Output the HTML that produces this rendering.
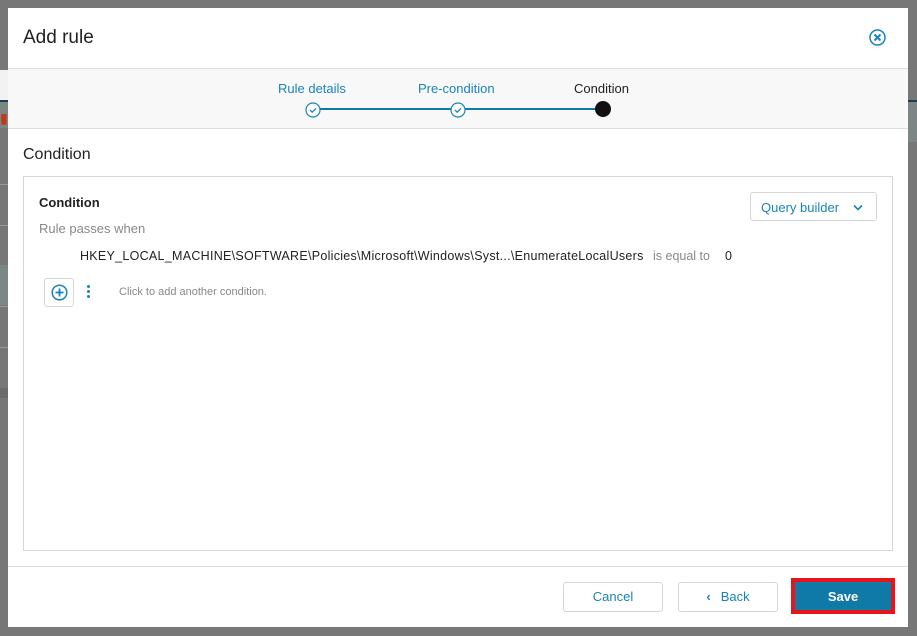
<!DOCTYPE html>
<html><head><style>
*{box-sizing:border-box;margin:0;padding:0}
body{width:917px;height:636px;background:#777;font-family:"Liberation Sans",sans-serif;position:relative;overflow:hidden}
.abs{position:absolute}
.modal{left:8px;top:8px;width:900px;height:619px;background:#fff}
.t{position:absolute;white-space:nowrap}
.btn{position:absolute;top:574px;height:30px;border:1px solid #d6d6d6;border-radius:3px;color:#1a84b8;font-size:13px;text-align:center;line-height:28px;background:#fff}
</style></head><body>
<div class="abs" style="left:0;top:70px;width:8px;height:30px;background:#f2f2f2"></div>
<div class="abs" style="left:0;top:100px;width:8px;height:2px;background:#1e3c55"></div>
<div class="abs" style="left:0;top:102px;width:8px;height:26px;background:#7d8585"></div>
<div class="abs" style="left:0;top:110px;width:8px;height:20px;color:#c0391c;font-size:14px">▮</div>
<div class="abs" style="left:0;top:184px;width:8px;height:1px;background:#9a9a9a"></div>
<div class="abs" style="left:0;top:225px;width:8px;height:1px;background:#9a9a9a"></div>
<div class="abs" style="left:0;top:265px;width:8px;height:40px;background:#7d8585"></div>
<div class="abs" style="left:0;top:306px;width:8px;height:1px;background:#9a9a9a"></div>
<div class="abs" style="left:0;top:347px;width:8px;height:1px;background:#9a9a9a"></div>
<div class="abs" style="left:0;top:388px;width:8px;height:10px;background:#6b6b6b"></div>
<div class="abs" style="left:908px;top:100px;width:9px;height:2px;background:#1e3c55"></div>
<div class="abs" style="left:908px;top:102px;width:9px;height:40px;background:#7d8585"></div>

<div class="abs modal">
 <div class="t" style="left:15px;top:19px;font-size:19px;color:#222">Add rule</div>
 <svg class="abs" style="left:860px;top:20px" width="19" height="19" viewBox="0 0 19 19"><circle cx="9.5" cy="9.5" r="7.5" fill="none" stroke="#1a84b8" stroke-width="1.5"/><path d="M6.5 6.5l6 6M12.5 6.5l-6 6" stroke="#1a84b8" stroke-width="2"/></svg>
 <div class="abs" style="left:0;top:60px;width:900px;height:61px;background:#f8f8f8;border-top:1px solid #dcdcdc;border-bottom:1px solid #dcdcdc"></div>
 <div class="t" style="left:270px;top:73px;font-size:13px;color:#1a84b8">Rule details</div>
 <div class="t" style="left:410px;top:73px;font-size:13px;color:#1a84b8">Pre-condition</div>
 <div class="t" style="left:566px;top:73px;font-size:13px;color:#222">Condition</div>
 <div class="abs" style="left:305px;top:100px;width:290px;height:2px;background:#0f79a8"></div>
 <svg class="abs" style="left:297px;top:94px" width="16" height="16"><circle cx="8" cy="8" r="7" fill="#fff" stroke="#1a84b8" stroke-width="1.2"/><path d="M5 8l2.2 2.2L11 6.3" fill="none" stroke="#1a84b8" stroke-width="1.3"/></svg>
 <svg class="abs" style="left:442px;top:94px" width="16" height="16"><circle cx="8" cy="8" r="7" fill="#fff" stroke="#1a84b8" stroke-width="1.2"/><path d="M5 8l2.2 2.2L11 6.3" fill="none" stroke="#1a84b8" stroke-width="1.3"/></svg>
 <div class="abs" style="left:587px;top:93px;width:16px;height:16px;border-radius:50%;background:#111"></div>
 <div class="t" style="left:15px;top:138px;font-size:16px;color:#222">Condition</div>
 <div class="abs" style="left:15px;top:168px;width:870px;height:375px;border:1px solid #d6d6d6"></div>
 <div class="t" style="left:31px;top:187px;font-size:13px;font-weight:bold;color:#222">Condition</div>
 <div class="t" style="left:31px;top:213px;font-size:13px;color:#888">Rule passes when</div>
 <div class="abs" style="left:742px;top:184px;width:127px;height:29px;border:1px solid #d6d6d6;border-radius:3px"></div>
 <div class="t" style="left:753px;top:192px;font-size:13px;color:#1a84b8">Query builder</div>
 <svg class="abs" style="left:845px;top:196px" width="10" height="8"><path d="M1 1.5l4 4 4-4" fill="none" stroke="#1a84b8" stroke-width="1.6"/></svg>
 <div class="t" style="left:72px;top:241px;font-size:12.5px;color:#222;letter-spacing:0.28px">HKEY_LOCAL_MACHINE\SOFTWARE\Policies\Microsoft\Windows\Syst...\EnumerateLocalUsers</div>
 <div class="t" style="left:645px;top:241px;font-size:12.5px;color:#888">is equal to</div>
 <div class="t" style="left:717px;top:241px;font-size:12.5px;color:#222">0</div>
 <div class="abs" style="left:36px;top:270px;width:30px;height:29px;border:1px solid #d6d6d6;border-radius:3px"></div>
 <svg class="abs" style="left:43px;top:276px" width="17" height="17"><circle cx="8.5" cy="8.5" r="7.3" fill="none" stroke="#1a84b8" stroke-width="1.5"/><path d="M8.5 4.5v8M4.5 8.5h8" stroke="#1a84b8" stroke-width="1.8"/></svg>
 <div class="abs" style="left:79px;top:277px;width:3px;height:3px;border-radius:50%;background:#1a84b8;box-shadow:0 5px 0 #1a84b8,0 10px 0 #1a84b8"></div>
 <div class="t" style="left:111px;top:278px;font-size:11px;color:#888">Click to add another condition.</div>
 <div class="abs" style="left:0;top:558px;width:900px;height:1px;background:#dcdcdc"></div>
 <div class="btn" style="left:555px;width:100px">Cancel</div>
 <div class="btn" style="left:670px;width:100px"><span style="font-weight:bold;margin-right:10px">‹</span>Back</div>
 <div class="abs" style="left:783px;top:570px;width:104px;height:36px;background:#e8141c"></div>
 <div class="abs" style="left:787px;top:574px;width:96px;height:28px;background:#0f79a8;color:#fff;font-weight:bold;font-size:13px;text-align:center;line-height:30px">Save</div>
</div>
</body></html>
